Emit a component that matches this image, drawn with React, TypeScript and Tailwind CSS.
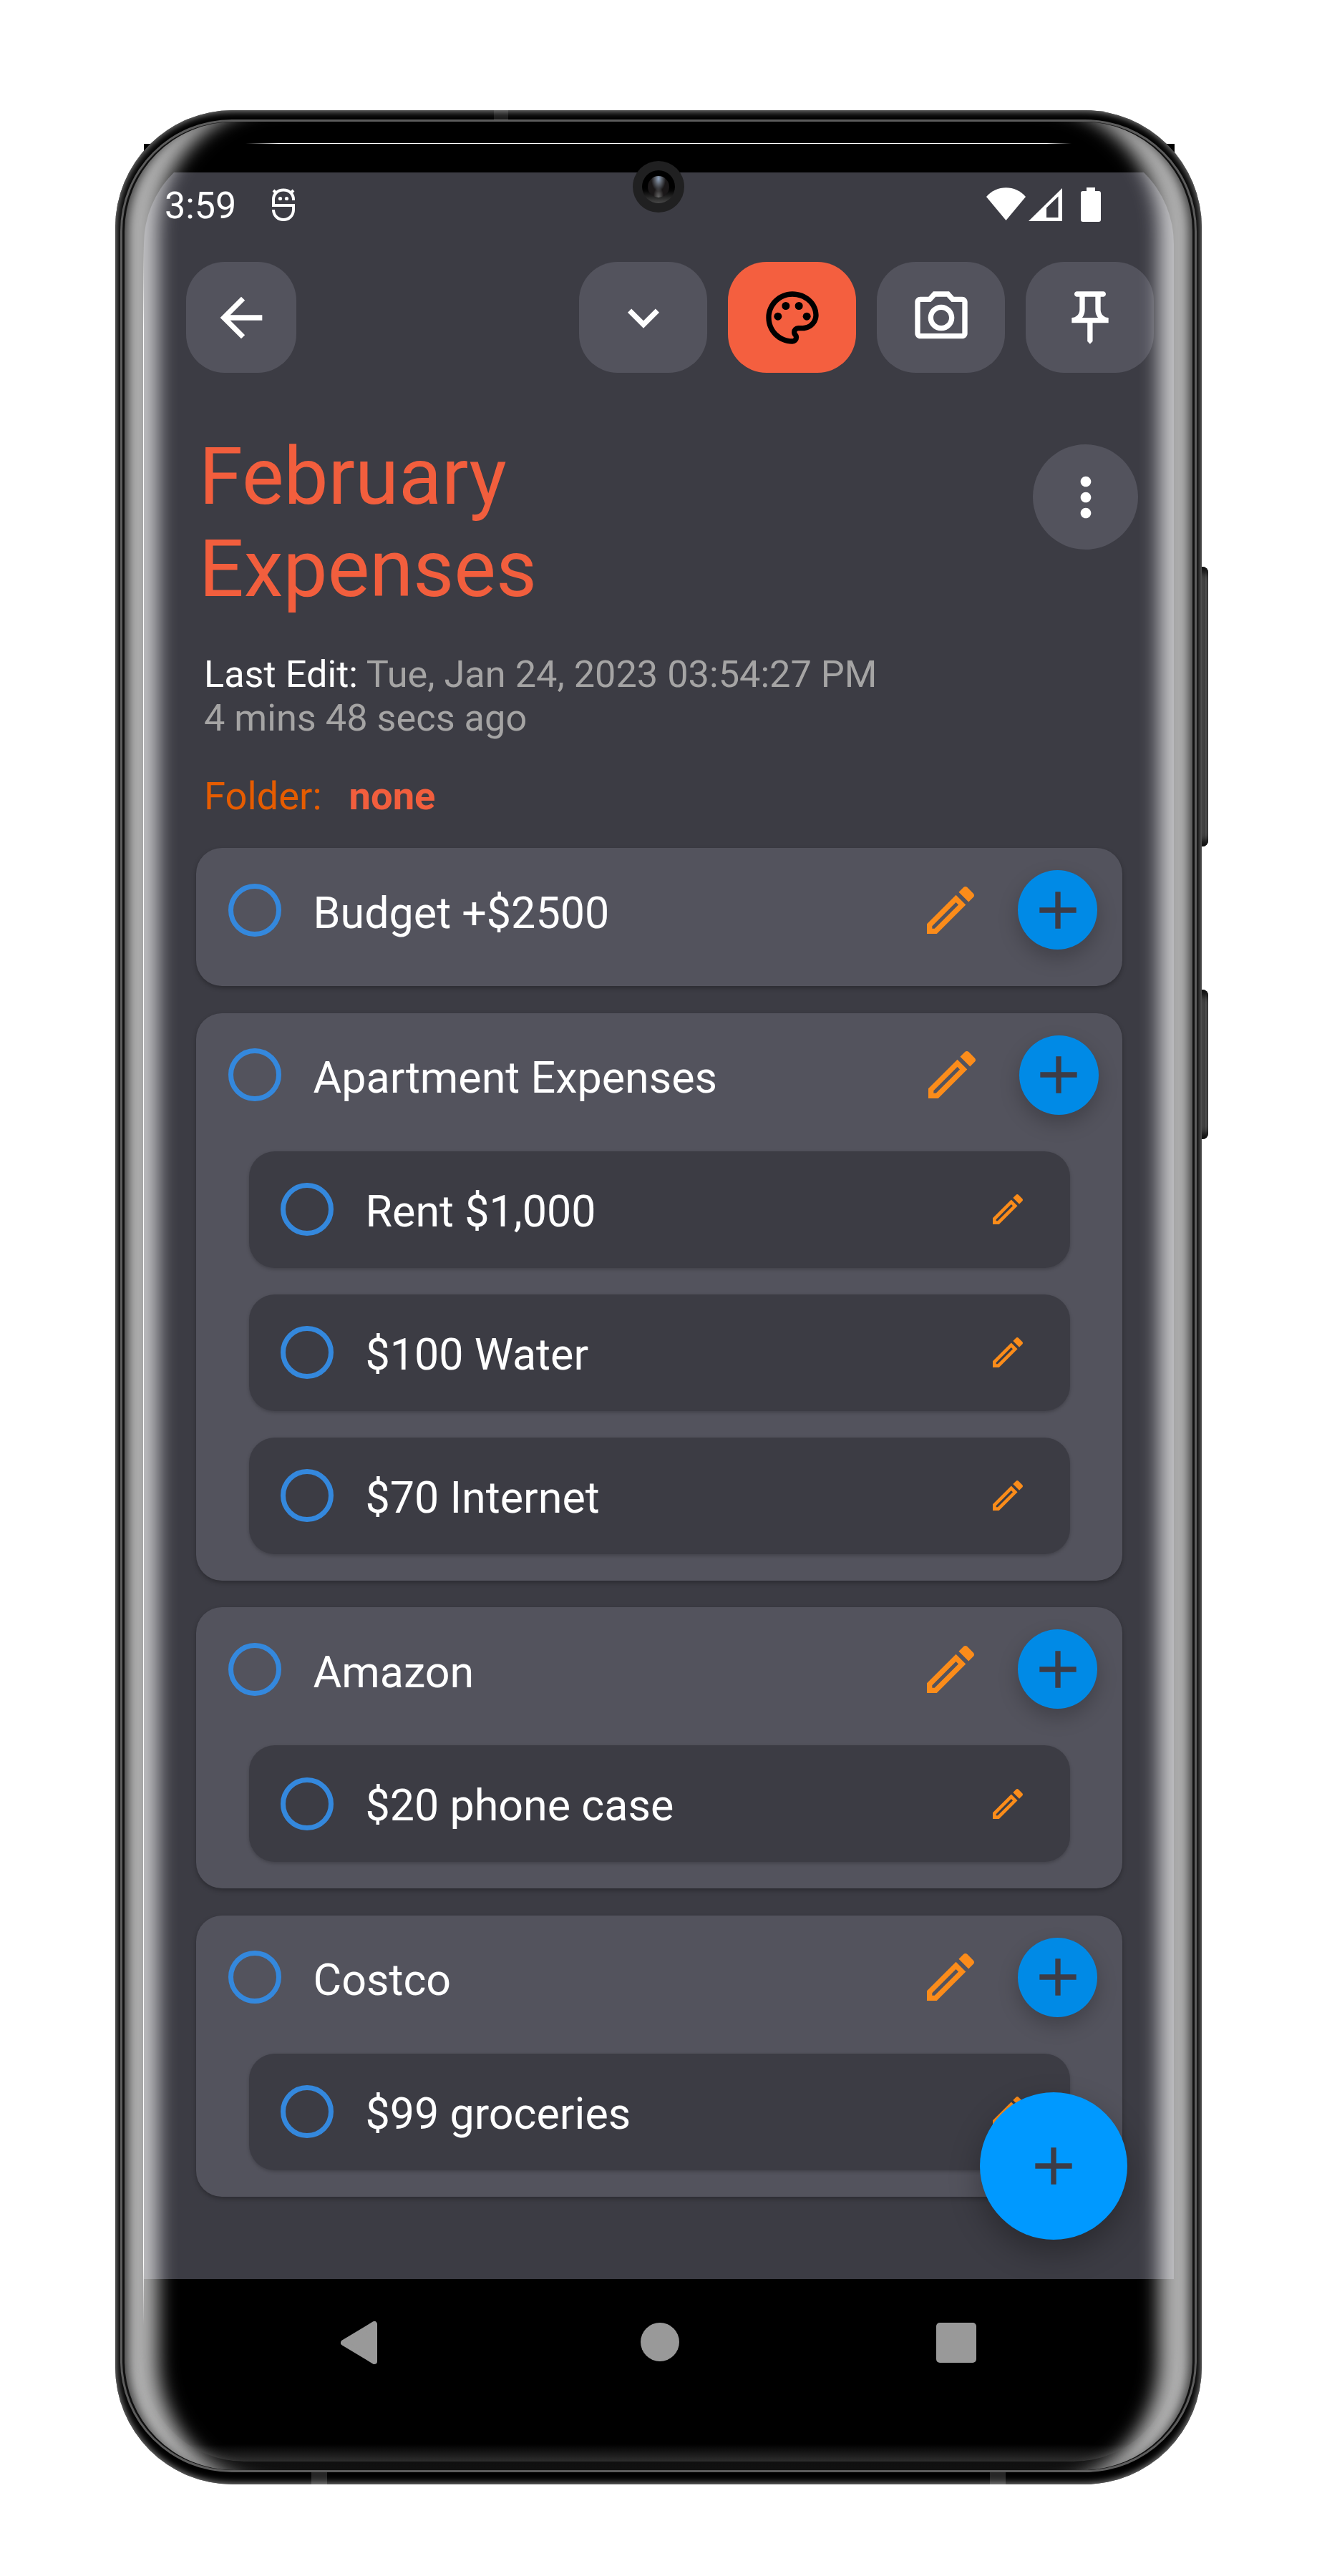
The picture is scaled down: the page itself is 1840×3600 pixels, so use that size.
import React from "react";

const PENCIL =
  "M14.06 9l.94.94L5.92 19H5v-.92L14.06 9m3.6-6c-.25 0-.51.1-.7.29l-1.83 1.83 3.75 3.75 1.83-1.83c.39-.39.39-1.04 0-1.41l-2.34-2.34c-.2-.2-.45-.29-.71-.29m-3.6 3.19L3 17.25V21h3.75L17.81 9.94l-3.75-3.75z";
const PLUS = "M19 13h-6v6h-2v-6H5v-2h6V5h2v6h6v2z";
const BACK = "M20 11H7.83l5.59-5.59L12 4l-8 8 8 8 1.41-1.41L7.83 13H20v-2z";
const CHEVRON = "M16.59 8.59L12 13.17 7.41 8.59 6 10l6 6 6-6z";
const PALETTE =
  "M12 22C6.49 22 2 17.51 2 12S6.49 2 12 2s10 4.04 10 9c0 3.31-2.69 6-6 6h-1.77c-.28 0-.5.22-.5.5 0 .12.05.23.13.33.41.47.64 1.06.64 1.67A2.5 2.5 0 0112 22zm0-18c-4.41 0-8 3.59-8 8s3.59 8 8 8c.28 0 .5-.22.5-.5a.54.54 0 00-.14-.35c-.41-.46-.63-1.05-.63-1.65a2.5 2.5 0 012.5-2.5H16c2.21 0 4-1.79 4-4 0-3.86-3.59-7-8-7z";
const CAMERA =
  "M14.12 4l1.83 2H20v12H4V6h4.05l1.83-2h4.24M15 2H9L7.17 4H4c-1.1 0-2 .9-2 2v12c0 1.1.9 2 2 2h16c1.1 0 2-.9 2-2V6c0-1.1-.9-2-2-2h-3.17L15 2zm-3 7c1.65 0 3 1.35 3 3s-1.35 3-3 3-3-1.35-3-3 1.35-3 3-3m0-2c-2.76 0-5 2.24-5 5s2.24 5 5 5 5-2.24 5-5-2.24-5-5-5z";
const PIN =
  "M14 4v5c0 1.12.37 2.16 1 3H9c.65-.86 1-1.9 1-3V4h4m3-2H7c-.55 0-1 .45-1 1s.45 1 1 1h1v5c0 1.66-1.34 3-3 3v2h5.97v7l1 1 1-1v-7H19v-2c-1.66 0-3-1.34-3-3V4h1c.55 0 1-.45 1-1s-.45-1-1-1z";
const MORE =
  "M12 8c1.1 0 2-.9 2-2s-.9-2-2-2-2 .9-2 2 .9 2 2 2zm0 2c-1.1 0-2 .9-2 2s.9 2 2 2 2-.9 2-2-.9-2-2-2zm0 6c-1.1 0-2 .9-2 2s.9 2 2 2 2-.9 2-2-.9-2-2-2z";

function Icon({ d, className = "", children }: { d: string; className?: string; children?: React.ReactNode }) {
  return (
    <svg viewBox="0 0 24 24" fill="currentColor" className={`size-[88px] shrink-0 ${className}`}>
      <path d={d} />
      {children}
    </svg>
  );
}

function ToolButton({ active = false, children }: { active?: boolean; children: React.ReactNode }) {
  return (
    <button
      className={`flex h-[155px] w-[179px] items-center justify-center rounded-[54px] ${
        active ? "bg-[#f45f3f] text-black" : "bg-[#53535d] text-white"
      }`}
    >
      {children}
    </button>
  );
}

function Radio() {
  return <span className="size-[74px] shrink-0 rounded-full border-[7.5px] border-[#3488dd]" />;
}

function SubTask({ label }: { label: string }) {
  return (
    <li className="flex h-[163px] items-center rounded-[36px] bg-[#3c3c44] pr-[59px] pl-[44px] shadow-[0_2px_5px_rgba(0,0,0,0.22)]">
      <Radio />
      <span className="ml-[45px] flex-1 pt-[6px] text-[61px] leading-none whitespace-nowrap">{label}</span>
      <svg viewBox="0 0 24 24" fill="#fb8c1a" className="size-[56px] shrink-0">
        <path d={PENCIL} />
      </svg>
    </li>
  );
}

function TaskCard({ label, items = [], nudged = false }: { label: string; items?: string[]; nudged?: boolean }) {
  return (
    <section className="rounded-[36px] bg-[#53535d] shadow-[0_3px_6px_rgba(0,0,0,0.28)]">
      <header className={`flex h-[193px] items-center pb-[20px] pl-[45px] ${nudged ? "pr-[33.5px]" : "pr-[35px]"}`}>
        <Radio />
        <span className="ml-[44.5px] flex-1 pt-[9px] text-[61px] leading-none whitespace-nowrap">{label}</span>
        <Icon d={PENCIL} className="mr-[50px] text-[#fb8c1a]" />
        <button className="flex size-[111px] items-center justify-center rounded-full bg-[#008ae6] text-[#3d3c46] shadow-[0_12px_28px_rgba(0,0,0,0.22)]">
          <Icon d={PLUS} />
        </button>
      </header>
      {items.length > 0 && (
        <ul className="flex flex-col gap-[37px] pr-[73.5px] pb-[37px] pl-[73.5px]">
          {items.map((item) => (
            <SubTask key={item} label={item} />
          ))}
        </ul>
      )}
    </section>
  );
}

function StatusBar() {
  return (
    <div className="flex h-[89px] items-center pl-[29px] text-[52px] leading-none">
      <span className="pt-[4px]">3:59</span>
      <svg viewBox="0 0 32 46" className="ml-[50px] h-[46px] w-[32px]" fill="none" stroke="#fff" strokeWidth="4">
        <path d="M30 17v-1C30 8 24 2.500 16 2.500S2 8 2 16v8h28v6c0 8-6 14-14 14S2 38 2 30" />
        <path d="M2 3l4 4M30 3l-4 4" />
        <circle cx="11.500" cy="14.500" r="2.600" fill="#fff" stroke="none" />
        <circle cx="20.500" cy="14.500" r="2.600" fill="#fff" stroke="none" />
      </svg>
      <svg viewBox="0 0 161 48" className="ml-auto mr-[101px] h-[48px] w-[161px]" fill="#fff">
        <path d="M0 13C14-4 41-4 55 13L27.500 46z" />
        <path fillRule="evenodd" d="M59 47L106 1v46zM84 42h16.500V12.500L84 28.500z" />
        <path d="M140 0h12v5h5q3 0 3 3v37q0 3-3 3h-22q-3 0-3-3V8q0-3 3-3h5z" />
      </svg>
    </div>
  );
}

function NavBar() {
  return (
    <nav className="flex flex-1 items-start pt-[61px] pl-[275px]">
      <svg
        viewBox="0 0 51 60"
        className="-mt-[2px] h-[60px] w-[51px]"
        fill="#999"
        stroke="#999"
        strokeWidth="8"
        strokeLinejoin="round"
      >
        <path d="M4 30L47 4v52z" />
      </svg>
      <span className="ml-[367.5px] size-[54px] rounded-full bg-[#999]" />
      <span className="ml-[359px] size-[56px] rounded-[5px] bg-[#999]" />
    </nav>
  );
}

function Screen() {
  return (
    <div className="relative flex h-[3239px] w-[1439px] flex-col overflow-hidden rounded-[140px] bg-black pt-[40px]">
      <main className="relative h-[2944px] bg-[#3c3c44] text-white">
        <StatusBar />
        <div className="mt-[36px] flex pr-[28px] pl-[59px]">
          <button className="flex h-[155px] w-[154px] items-center justify-center rounded-[54px] bg-[#53535d]">
            <Icon d={BACK} />
          </button>
          <div className="ml-auto flex gap-[29px]">
            <ToolButton>
              <Icon d={CHEVRON} />
            </ToolButton>
            <ToolButton active>
              <Icon d={PALETTE}>
                <circle cx="6.500" cy="11.500" r="1.500" />
                <circle cx="9.500" cy="7.500" r="1.500" />
                <circle cx="14.500" cy="7.500" r="1.500" />
                <circle cx="17.500" cy="11.500" r="1.500" />
              </Icon>
            </ToolButton>
            <ToolButton>
              <Icon d={CAMERA} />
            </ToolButton>
            <ToolButton>
              <Icon d={PIN} />
            </ToolButton>
          </div>
        </div>
        <div className="flex items-start justify-between pt-[81px] pr-[50px] pl-[77px]">
          <h1 className="w-[600px] text-[110.5px] leading-[129px] text-[#f25e3d]">February Expenses</h1>
          <button className="mt-[19px] flex size-[147px] items-center justify-center rounded-full bg-[#53535d]">
            <Icon d={MORE} />
          </button>
        </div>
        <div className="mt-[52px] pl-[84px] text-[52.3px] leading-[61px] text-[#a5a4a4]">
          <p>
            <span className="text-white">Last Edit:</span> Tue, Jan 24, 2023 03:54:27 PM
          </p>
          <p>4 mins 48 secs ago</p>
        </div>
        <p className="mt-[48px] flex pl-[84px] text-[54.3px] leading-[62px] text-[#e65c00]">
          Folder:<strong className="ml-[38px] font-bold text-[#f25e3d]">none</strong>
        </p>
        <div className="mt-[41px] flex flex-col gap-[37.5px] pr-[72px] pl-[73px]">
          <TaskCard label="Budget +$2500" />
          <TaskCard label="Apartment Expenses" items={["Rent $1,000", "$100 Water", "$70 Internet"]} nudged />
          <TaskCard label="Amazon" items={["$20 phone case"]} />
          <TaskCard label="Costco" items={["$99 groceries"]} />
        </div>
        <button className="absolute right-[65px] bottom-[55px] flex size-[206px] items-center justify-center rounded-full bg-[#0099ff] text-[#3d3c46] shadow-[0_18px_44px_rgba(0,0,0,0.3)]">
          <Icon d={PLUS} />
        </button>
      </main>
      <NavBar />
      <div className="absolute inset-x-0 bottom-0 h-[24px] bg-linear-to-b from-transparent to-[#2e2e2e]" />
    </div>
  );
}

function Camera() {
  return (
    <div className="absolute top-[55px] left-[713px] flex size-[72px] items-center justify-center rounded-full bg-[#202021]">
      <div className="flex size-[46px] items-center justify-center rounded-full bg-linear-to-b from-black from-45% to-[#484848]">
        <div className="size-[30px] rounded-full bg-[#1a1718] bg-[radial-gradient(ellipse_at_50%_12%,#8fa3bd_0%,#5b6069_22%,transparent_48%),radial-gradient(ellipse_at_50%_100%,#6a6a6a_0%,transparent_35%)]" />
      </div>
    </div>
  );
}

export default function App() {
  return (
    <div className="relative h-[3600px] w-[1840px] overflow-hidden bg-white pt-[154px] pl-[161px] font-['Roboto',sans-serif]">
      {/* side keys and square display corners sitting behind the body */}
      <div className="absolute top-[792px] left-[1670px] h-[391px] w-[18px] rounded-[8px] bg-[linear-gradient(to_right,#484848_70%,#858585_85%)] shadow-[inset_0_8px_8px_#111,inset_0_-8px_8px_#111]" />
      <div className="absolute top-[1383px] left-[1670px] h-[209px] w-[18px] rounded-[8px] bg-[linear-gradient(to_right,#484848_70%,#858585_85%)] shadow-[inset_0_8px_8px_#111,inset_0_-8px_8px_#111]" />
      <div className="absolute top-[201px] left-[201px] h-[60px] w-[1440px] bg-black" />

      <div className="relative h-[3318px] w-[1518px] rounded-[164px] bg-black pt-[13px] pl-[7px] shadow-[inset_0_0_10px_2px_#808080]">
        <div className="absolute top-0 left-[529px] h-[14px] w-[20px] bg-white/10" />
        <div className="absolute bottom-0 left-[274px] h-[17px] w-[22px] bg-white/15" />
        <div className="absolute bottom-0 left-[1222px] h-[17px] w-[22px] bg-white/15" />
        <div className="h-[3288px] w-[1504px] rounded-[156px] bg-[#5c5c5c] p-[3px]">
          <div className="relative h-full w-full rounded-[153px] bg-linear-to-b from-black from-90% to-[#111] pt-[31px] pl-[30px]">
            <div className="absolute top-[30px] left-[172px] h-px w-[1154px] bg-linear-to-r from-transparent via-white via-4% to-white to-96% mask-r-from-97%" />
            <Screen />
            <div className="pointer-events-none absolute inset-0 rounded-[153px] shadow-[inset_3px_0_0_#101010,inset_-3px_0_0_#101010,inset_22px_0_14px_-14px_rgba(0,0,0,0.65),inset_-22px_0_14px_-14px_rgba(0,0,0,0.65),inset_76px_0_26px_-26px_rgba(255,255,255,0.68),inset_-76px_0_26px_-26px_rgba(255,255,255,0.68)]" />
            <div className="absolute top-[170px] left-[29px] h-[2910px] w-px bg-linear-to-b from-transparent via-white via-4% to-white mask-b-from-97%" />
            <Camera />
          </div>
        </div>
      </div>
    </div>
  );
}
